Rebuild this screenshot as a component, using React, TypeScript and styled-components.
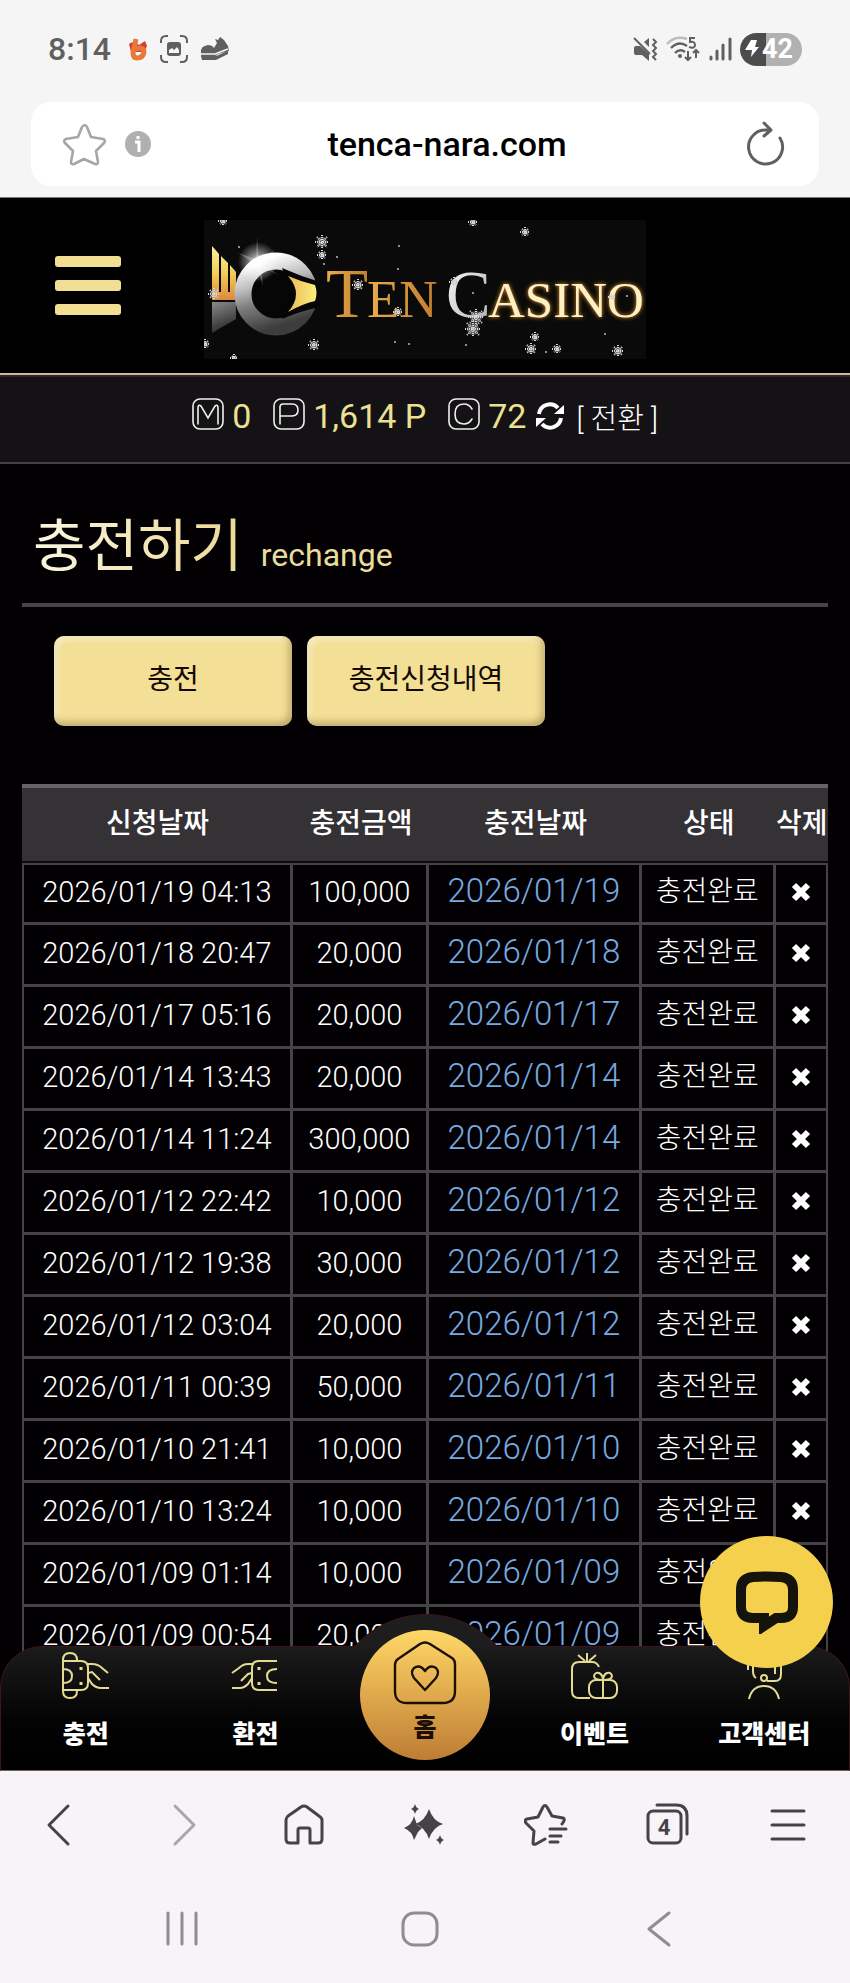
import React from 'react';
import styled, { createGlobalStyle } from 'styled-components';

const GlobalStyle = createGlobalStyle`
  * {
    box-sizing: border-box;
  }
  body {
    margin: 0;
    background: #000;
    font-family: Roboto, 'Noto Sans CJK KR', sans-serif;
  }
  button {
    padding: 0;
    border: 0;
    background: none;
    color: inherit;
    font: inherit;
    cursor: pointer;
  }
  a {
    color: inherit;
    text-decoration: none;
  }
  svg {
    display: block;
    flex: none;
  }
`;

const Phone = styled.div`
  display: flex;
  flex-direction: column;
  height: 100vh;
`;

/* ---------- top of the phone ---------- */

const TopChrome = styled.header`
  padding: 28px 31px 11px;
  background: #f5f5f5;
  border-bottom: 1px solid #777;
`;

const StatusBar = styled.div`
  display: flex;
  align-items: center;
  height: 42px;
  margin-bottom: 32px;
  padding: 0 17px;
  color: #606060;
`;

const Clock = styled.time`
  margin-right: 17px;
  font-size: 32px;
  font-weight: 500;
`;

const StatusIcons = styled.div`
  display: flex;
  align-items: center;
  gap: 12px;
`;

const StatusRight = styled(StatusIcons)`
  margin-left: auto;
  gap: 8px;
`;

const Battery = styled.div`
  display: flex;
  align-items: center;
  width: 62px;
  height: 33px;
  padding-left: 4px;
  border-radius: 17px;
  background: linear-gradient(90deg, #4c4c4c 42%, #b1b1b1 42%);
  color: #fff;
  font-size: 27px;
  font-weight: 700;
`;

const AddressBar = styled.div`
  display: flex;
  align-items: center;
  height: 84px;
  padding: 0 32px;
  border-radius: 20px;
  background: #fff;
`;

const AddressSide = styled.div`
  display: flex;
  flex: 1;
  align-items: center;
  gap: 19px;

  &:last-child {
    justify-content: flex-end;
  }
`;

const Url = styled.span`
  margin-left: 44px;
  color: #000;
  font-size: 34px;
  font-weight: 500;
`;

/* ---------- the site ---------- */

const Site = styled.div`
  position: relative;
  flex: 1;
  min-height: 0;
  overflow: hidden;
  background: #020003;
  color: #fff;
`;

const SiteHeader = styled.div`
  display: grid;
  grid-template-columns: 1fr auto 1fr;
  align-items: center;
  height: 177px;
  padding: 20px 55px 12px;
  background: #000;
  border-bottom: 2px solid #cbb899;
`;

const MenuButton = styled.button`
  display: flex;
  flex-direction: column;
  gap: 13px;
  width: 66px;
  margin-bottom: 9px;

  span {
    height: 11px;
    border-radius: 3px;
    background: #f3df94;
  }
`;

const Balance = styled.div`
  display: flex;
  align-items: center;
  justify-content: center;
  height: 89px;
  padding-bottom: 7px;
  background: #141214;
  border-top: 2px solid #2c2523;
  border-bottom: 2px solid #434043;
`;

const Coin = styled.svg`
  width: 32px;
  height: 32px;
  margin-bottom: 5px;
`;

const Amount = styled.span`
  margin: 0 22px 0 8px;
  color: #ece193;
  font-size: 34px;

  &:last-of-type {
    margin-right: 10px;
  }
`;

const ConvertButton = styled.button`
  display: flex;
  align-items: center;
  gap: 12px;
  font-size: 29px;
  font-weight: 300;
  white-space: pre;
`;

const Content = styled.main`
  padding: 0 22px;
`;

const TitleRow = styled.div`
  display: flex;
  align-items: baseline;
  gap: 18px;
  height: 143px;
  padding: 44px 11px 0;
  border-bottom: 4px solid #464245;
`;

const Title = styled.h1`
  margin: 0;
  background: linear-gradient(90deg, #faf6df, #ecd996);
  background-clip: text;
  color: transparent;
  font-size: 57px;
  font-weight: 400;
  line-height: 78px;
`;

const Subtitle = styled.span`
  color: #eadc9c;
  font-size: 32px;
`;

const Actions = styled.div`
  display: flex;
  gap: 15px;
  padding: 29px 32px 58px;
`;

const ActionButton = styled.button`
  width: 238px;
  height: 90px;
  padding-bottom: 8px;
  border-radius: 10px;
  background: #f3df96;
  box-shadow: inset -3px -4px 7px rgba(110, 90, 40, 0.4),
    inset 3px 3px 6px rgba(255, 255, 255, 0.5);
  color: #140a04;
  font-size: 28px;
`;

const HistoryTable = styled.table`
  width: 100%;
  table-layout: fixed;
  border-collapse: separate;
  border-spacing: 0;
  text-align: center;
  white-space: nowrap;
`;

const HeadCell = styled.th`
  height: 79px;
  padding: 0 0 7px;
  border-top: 4px solid #676467;
  border-bottom: 2px solid #0c0a0c;
  background: #353235;
  font-size: 28px;
  font-weight: 500;
`;

const Cell = styled.td`
  height: 62px;
  padding: 0 0 4px;
  border: 0 solid #454345;
  border-width: 0 3px 3px 0;
  font-size: 29px;
  font-weight: 300;
  line-height: 40px;

  &:first-child {
    border-left-width: 2px;
  }
  &:last-child {
    border-right-width: 2px;
  }
  tr:first-child > & {
    border-top-width: 2px;
  }
`;

const DateLink = styled.a`
  color: #76aae0;
  font-size: 33px;
`;

const Status = styled.span`
  font-size: 28px;
`;

const DeleteButton = styled.button`
  display: block;
  margin: 0 auto;
`;

/* ---------- site tab bar ---------- */

const TabBar = styled.nav`
  position: absolute;
  right: 0;
  bottom: 0;
  left: 0;
  display: grid;
  grid-template-columns: repeat(5, 1fr);
  height: 125px;
  border: 1px solid #3c1719;
  border-bottom: 1px solid #6c666a;
  border-radius: 42px 42px 0 0;
  background: linear-gradient(#1b1b1b, #040304 60%, #000);
`;

const TabLink = styled.a`
  display: flex;
  flex-direction: column;
  align-items: center;
  gap: 17px;
  padding-top: 5px;
  font-size: 25px;
  font-weight: 900;
  line-height: 36px;
`;

/* the part of the round hump that rises above the bar */
const HomeHump = styled.div`
  position: absolute;
  bottom: 100%;
  left: 50%;
  width: 146px;
  height: 33px;
  overflow: hidden;
  transform: translateX(-50%);

  &::before {
    content: '';
    display: block;
    width: 190px;
    height: 190px;
    margin-left: -22px;
    border: 1px solid #3c1719;
    border-radius: 50%;
    background: #1c1d1c;
  }
`;

const HomeLink = styled.a`
  position: absolute;
  bottom: 10px;
  left: 50%;
  display: flex;
  flex-direction: column;
  align-items: center;
  width: 130px;
  height: 130px;
  padding-top: 11px;
  border-radius: 50%;
  background: linear-gradient(#ffd867, #e0a94c 50%, #bd7d35);
  color: #1c0f08;
  font-size: 25px;
  font-weight: 900;
  line-height: 46px;
  transform: translateX(-50%);
`;

const ChatButton = styled.button`
  position: absolute;
  right: 17px;
  bottom: 103px;
  display: grid;
  place-items: center;
  width: 133px;
  height: 132px;
  border-radius: 50%;
  background: #f5d04d;
`;

/* ---------- bottom of the phone ---------- */

const BrowserBar = styled.nav`
  display: grid;
  grid-template-columns: repeat(7, 1fr);
  height: 108px;
  background: #f7f3f7;
  color: #474247;

  button {
    display: grid;
    place-items: center;
  }
`;

const SystemBar = styled(BrowserBar)`
  grid-template-columns: repeat(3, 1fr);
  height: 104px;
  padding: 0 72px 4px 63px;
  color: #918c91;
`;

const flakes = [
  [19, 1, 5], [118, 22, 7], [118, 35, 5], [154, 65, 6], [194, 92, 5],
  [10, 74, 6], [1, 124, 5], [110, 125, 6], [30, 138, 4], [269, 2, 5],
  [321, 12, 5], [250, 62, 5], [272, 97, 8], [269, 109, 8], [331, 117, 5],
  [327, 129, 6], [353, 129, 5], [414, 131, 6], [408, 77, 4],
];

const specks = [
  [35, 27], [133, 37], [194, 49], [195, 26], [191, 122], [205, 124],
  [269, 73], [423, 76], [401, 114], [342, 132], [262, 125], [120, 44],
];

const Logo = () => (
  <svg width="442" height="139" viewBox="0 0 442 139" role="img" aria-label="Ten Casino">
    <defs>
      <linearGradient id="fan" x1="0" y1="0" x2="0" y2="1">
        <stop offset="0" stopColor="#fff3a0" />
        <stop offset="0.5" stopColor="#f2cc58" />
        <stop offset="1" stopColor="#dd8a3c" />
      </linearGradient>
      <linearGradient id="pupil" x1="0" y1="0" x2="1" y2="0">
        <stop offset="0" stopColor="#e9b95a" />
        <stop offset="1" stopColor="#fbee7c" />
      </linearGradient>
      <linearGradient id="ring" x1="0.2" y1="0" x2="0.5" y2="1">
        <stop offset="0" stopColor="#fff" />
        <stop offset="0.35" stopColor="#bdbdbd" />
        <stop offset="0.6" stopColor="#7e7e7e" />
        <stop offset="1" stopColor="#3d3d3d" />
      </linearGradient>
      <linearGradient id="base" x1="0" y1="0" x2="0.3" y2="1">
        <stop offset="0" stopColor="#8a8a8a" />
        <stop offset="1" stopColor="#2c2c2c" />
      </linearGradient>
      <linearGradient id="ten" x1="0" y1="0" x2="1" y2="0">
        <stop offset="0" stopColor="#e9ac4c" />
        <stop offset="1" stopColor="#c07f2c" />
      </linearGradient>
      <linearGradient id="silver" x1="0" y1="0" x2="1" y2="1">
        <stop offset="0" stopColor="#fff" />
        <stop offset="1" stopColor="#aaa" />
      </linearGradient>
      <radialGradient id="flare">
        <stop offset="0" stopColor="#fff" />
        <stop offset="0.4" stopColor="#fff" stopOpacity="0.5" />
        <stop offset="1" stopColor="#fff" stopOpacity="0" />
      </radialGradient>
      <filter id="glow" x="-10%" y="-30%" width="120%" height="160%">
        <feDropShadow dx="0" dy="0" stdDeviation="2" floodColor="#f09a1c" />
      </filter>
    </defs>
    <rect width="442" height="139" fill="#0a0a0a" />
    <path d="M8 26l7 8v38h2V36l7 7v29h2V45l6 7v28H8z" fill="url(#fan)" />
    <path d="M8 82h24v17L8 113z" fill="url(#base)" />
    <circle cx="72" cy="74" r="33" fill="#060606" stroke="url(#ring)" strokeWidth="17" />
    <path d="M78 48q18 8 38 14v25q-20 4-38 12q12-25 0-51z" fill="#050505" />
    <path d="M84 56q14 6 27 9q3 8 0 16q-13 3-27 11q16-18 0-36z" fill="url(#pupil)" />
    <circle cx="54" cy="42" r="20" fill="url(#flare)" />
    <path d="M53 17l2 22l16-9l-13 13l16 12l-17-9l2 20l-6-19l-14 9l11-13l-16-10l18 6z" fill="#fff" opacity="0.25" />
    <g fontFamily="Liberation Serif, serif">
      <text x="122" y="97" fontSize="69" fill="url(#ten)">T</text>
      <text x="163" y="97" fontSize="53" fill="url(#ten)">EN</text>
      <text x="242" y="97" fontSize="67" fill="url(#silver)">C</text>
      <text x="284" y="97" fontSize="51" fill="#fff0c4" filter="url(#glow)">ASINO</text>
    </g>
    {flakes.map(([x, y, r]) => (
      <g key={`${x}-${y}`} transform={`translate(${x} ${y})`} stroke="#d8d8d8" strokeWidth="2">
        <circle r={r - 2} fill="#aaa" stroke="none" opacity="0.5" />
        <path
          d={`M0 ${-r}V${r}M${-r} 0H${r}M${2 - r} ${2 - r}L${r - 2} ${r - 2}M${r - 2} ${2 - r}L${2 - r} ${r - 2}`}
          strokeDasharray="1 1"
        />
      </g>
    ))}
    {specks.map(([x, y]) => (
      <circle key={`${x}-${y}`} cx={x} cy={y} r="1" fill="#bbb" />
    ))}
  </svg>
);

const coinPaths: Record<string, string> = {
  M: 'M6 26V10q0-4 3-2l7 12l7-12q3-2 3 2v16',
  P: 'M7 26V9q0-3 3-3h9q6 0 6 6t-6 6H7',
  C: 'M24 11q-3-5-8-5q-9 0-9 10t9 10q5 0 8-5',
};

const CoinIcon = ({ kind }: { kind: string }) => (
  <Coin viewBox="0 0 32 32" fill="none" stroke="#f0f0f0" strokeWidth="1.6" aria-label={kind}>
    <rect x="1" y="1" width="30" height="30" rx="7" />
    <path d={coinPaths[kind]} strokeLinecap="round" />
  </Coin>
);

const RefreshIcon = () => (
  <svg width="28" height="28" viewBox="0 0 28 28" fill="none" stroke="#fff" strokeWidth="4">
    <path d="M3 12A11 11 0 0 1 22 6M25 16A11 11 0 0 1 6 22" />
    <path d="M28 3v9h-10zM0 25v-9h10z" fill="#fff" stroke="none" />
  </svg>
);

const CrossIcon = () => (
  <svg width="20" height="20" viewBox="0 0 20 20" stroke="#fff" strokeWidth="6">
    <path d="M3 3l14 14M17 3L3 17" />
  </svg>
);

const DepositIcon = () => (
  <>
    <path d="M1 8Q1 1 8 1t7 7v1M1 39q0 7 7 7t7-7v-1M1 8v31M1 9h18q7 0 7 7v15q0 7-7 7H1M1 17q9 0 9 7t-9 7" />
    <path d="M24 12h6q6 0 10 4l6 5M26 21l4-1l8 8M26 26l4 6q4 4 9 4h8" />
    <path d="M19 15v3M19 30v3" strokeWidth="3" />
  </>
);

const WithdrawIcon = () => (
  <>
    <path d="M46 9H28q-7 0-7 7v15q0 7 7 7h18M46 17q-10 0-10 7t10 7" />
    <path d="M23 12h-6q-5 0-9 4l-7 5M21 21l-4 1l-7 7M21 26l-4 6q-4 4-8 4H1" />
    <path d="M28 15v3M28 30v3" strokeWidth="3" />
  </>
);

const GiftIcon = () => (
  <>
    <path d="M28 15q-2-5-7-5H8q-7 0-7 7v22q0 7 7 7h11M16 9V1M14 9L7 3M18 9l7-6" />
    <rect x="18" y="28" width="28" height="18" rx="7" />
    <path d="M32 46V28M32 28q-9 0-9-4q1-4 5-3q4 2 4 7zM32 28q9 0 9-4q-1-4-5-3q-4 2-4 7z" />
  </>
);

const SupportIcon = () => (
  <>
    <path d="M8 18V14Q8 3 24 3t17 11v8q0 7-6 7h-8M13 14v5q0 5 3 7M35 14v8" />
    <circle cx="24" cy="26" r="3" />
    <path d="M9 47q3-13 15-13t15 13" />
  </>
);

const tabs = [
  { label: '충전', icon: <DepositIcon /> },
  { label: '환전', icon: <WithdrawIcon /> },
  null,
  { label: '이벤트', icon: <GiftIcon /> },
  { label: '고객센터', icon: <SupportIcon /> },
];

const history = [
  ['2026/01/19', '04:13', '100,000'],
  ['2026/01/18', '20:47', '20,000'],
  ['2026/01/17', '05:16', '20,000'],
  ['2026/01/14', '13:43', '20,000'],
  ['2026/01/14', '11:24', '300,000'],
  ['2026/01/12', '22:42', '10,000'],
  ['2026/01/12', '19:38', '30,000'],
  ['2026/01/12', '03:04', '20,000'],
  ['2026/01/11', '00:39', '50,000'],
  ['2026/01/10', '21:41', '10,000'],
  ['2026/01/10', '13:24', '10,000'],
  ['2026/01/09', '01:14', '10,000'],
  ['2026/01/09', '00:54', '20,000'],
];

const LineIcon = ({ children }: { children: React.ReactNode }) => (
  <svg
    width="44"
    height="44"
    viewBox="0 0 44 44"
    fill="none"
    stroke="currentColor"
    strokeWidth="3"
    strokeLinecap="round"
    strokeLinejoin="round"
  >
    {children}
  </svg>
);

const PhoneTop = () => (
  <TopChrome>
    <StatusBar>
      <Clock>8:14</Clock>
      <StatusIcons>
        <svg width="20" height="26" viewBox="0 0 20 26">
          <path d="M1 8q3-3 7-1l3 2l6-4l2 5l-3 6H3z" fill="#c8442f" />
          <path
            d="M8 3L5 17q0 5 4 5q6 0 7-6q0-4-4-4q-3 0-5 2"
            fill="none"
            stroke="#e9783a"
            strokeWidth="5"
            strokeLinejoin="round"
          />
        </svg>
        <svg width="28" height="28" viewBox="0 0 28 28" fill="none" stroke="#606060" strokeWidth="2">
          <path d="M1 8V6q0-5 5-5h2M20 1h2q5 0 5 5v2M27 20v2q0 5-5 5h-2M8 27H6q-5 0-5-5v-2" />
          <rect x="7" y="7" width="14" height="14" rx="3" fill="#606060" stroke="none" />
          <path d="M9 18v-3l3-2l2 2l3-3l2 3v3z" fill="#f5f5f5" stroke="none" />
        </svg>
        <svg width="30" height="26" viewBox="0 0 30 26" fill="#606060">
          <path d="M1 17q-1-7 7-8q4 0 6 3l3-5l-2-4l3 1l2-3l4 3l4 6l1 5l-11 3l-4 3H1zM1 20h15l12-5v3l-12 6H2z" />
          <path d="M1 18h14l13-5" fill="none" stroke="#f5f5f5" strokeWidth="1.5" />
        </svg>
      </StatusIcons>
      <StatusRight>
        <svg width="25" height="25" viewBox="0 0 25 25" fill="#606060">
          <path d="M1 11q0-2 2-2h4l9 8v7l-7-6H3q-2 0-2-2zM11 5l5-4v9z" />
          <path d="M1 1l16 16M20 2l3 3l-3 3l3 3l-3 3l3 3l-3 3l3 3" fill="none" stroke="#606060" strokeWidth="2" />
        </svg>
        <svg width="35" height="26" viewBox="0 0 35 26" fill="none" stroke="#606060" strokeWidth="2.4">
          <path d="M1 8Q9-1 21 3" stroke="#bbb" />
          <path d="M5 12q8-8 16-2M9 17q5-5 10-1" />
          <circle cx="14" cy="20" r="2" fill="#606060" stroke="none" />
          <path d="M29 2h-5v4q5-1 5 3t-6 2M22 15v9M19 21l3 3l3-3M30 22v-8M27 17l3-3l3 3" strokeWidth="2" />
        </svg>
        <svg width="23" height="25" viewBox="0 0 23 25" stroke="#606060" strokeWidth="3" strokeLinecap="round">
          <path d="M2 20v2M8 14v8M14 8v14M21 2v20" />
        </svg>
        <Battery>
          <svg width="18" height="20" viewBox="0 0 18 20" fill="#fff">
            <path d="M7 1h6l-2 7h4L7 18l1-7H1z" />
          </svg>
          42
        </Battery>
      </StatusRight>
    </StatusBar>
    <AddressBar>
      <AddressSide>
        <svg width="43" height="43" viewBox="0 0 43 43" fill="none" stroke="#a6a6a6" strokeWidth="2.6" strokeLinejoin="round">
          <path d="M19 4q3-4 5 0l4 10l12 2q3 1 1 4l-8 8l2 11q0 3-3 2l-11-5l-10 5q-3 1-3-2l2-11l-8-8q-2-3 1-4l12-2z" />
        </svg>
        <svg width="26" height="26" viewBox="0 0 26 26">
          <circle cx="13" cy="13" r="13" fill="#b0b0b0" />
          <path d="M10 11h4v10M13 5v3" stroke="#fff" strokeWidth="3" fill="none" />
        </svg>
      </AddressSide>
      <Url>tenca-nara.com</Url>
      <AddressSide>
        <button aria-label="새로고침">
          <svg width="42" height="46" viewBox="0 0 42 46" fill="none" stroke="#606060" strokeWidth="3" strokeLinecap="round" strokeLinejoin="round">
            <path d="M35 17A17 17 0 1 1 21 9l5 0M19 2l7 7l-7 6" />
          </svg>
        </button>
      </AddressSide>
    </AddressBar>
  </TopChrome>
);

const HistoryRows = () => (
  <HistoryTable>
    <colgroup>
      <col style={{ width: '33.6%' }} />
      <col style={{ width: '16.9%' }} />
      <col style={{ width: '26.4%' }} />
      <col style={{ width: '16.6%' }} />
      <col />
    </colgroup>
    <thead>
      <tr>
        {['신청날짜', '충전금액', '충전날짜', '상태', '삭제'].map((head) => (
          <HeadCell key={head}>{head}</HeadCell>
        ))}
      </tr>
    </thead>
    <tbody>
      {history.map(([date, time, amount]) => (
        <tr key={date + time}>
          <Cell>{`${date} ${time}`}</Cell>
          <Cell>{amount}</Cell>
          <Cell>
            <DateLink href="#">{date}</DateLink>
          </Cell>
          <Cell>
            <Status>충전완료</Status>
          </Cell>
          <Cell>
            <DeleteButton aria-label="삭제">
              <CrossIcon />
            </DeleteButton>
          </Cell>
        </tr>
      ))}
    </tbody>
  </HistoryTable>
);

const SiteTabs = () => (
  <TabBar>
    <HomeHump />
    {tabs.map((tab, i) =>
      tab ? (
        <TabLink href="#" key={tab.label}>
          <svg width="48" height="48" viewBox="0 0 48 48" fill="none" stroke="#e5da92" strokeWidth="2">
            {tab.icon}
          </svg>
          {tab.label}
        </TabLink>
      ) : (
        <span key={i} />
      )
    )}
    <HomeLink href="#">
      <svg width="64" height="64" viewBox="0 0 64 64" fill="none" stroke="#1c0f08" strokeWidth="2.4" strokeLinejoin="round">
        <path d="M2 24q0-4 3-6L27 3q5-3 10 0l22 14q3 2 3 6v27q0 12-12 12H14Q2 62 2 50z" />
        <path d="M32 49L21 37q-4-6 0-10q6-4 11 3q5-7 11-3q4 4 0 10z" />
      </svg>
      홈
    </HomeLink>
  </TabBar>
);

const PhoneBottom = () => (
  <>
    <BrowserBar>
      <button aria-label="뒤로">
        <LineIcon><path d="M29 3L10 22l19 19" /></LineIcon>
      </button>
      <button aria-label="앞으로">
        <LineIcon><path d="M15 3l19 19l-19 19" stroke="#aaa5aa" /></LineIcon>
      </button>
      <button aria-label="홈">
        <LineIcon>
          <path d="M4 17q0-2 2-4L19 4q3-2 6 0l12 9q3 2 3 4v19q0 4-4 4h-8V27q0-2-2-2h-8q-2 0-2 2v13H8q-4 0-4-4z" />
        </LineIcon>
      </button>
      <button aria-label="AI">
        <LineIcon>
          <g fill="currentColor" stroke="none">
            <path d="M26 6q4 12 14 15q-10 3-14 15q-4-12-14-15q10-3 14-15z" />
            <path d="M11 13l3 9l5 3l-4 4l-4 8q-2-9-10-12q8-3 10-12z" />
            <path d="M12 1q1 4 4 5q-3 1-4 5q-1-4-4-5q3-1 4-5zM37 32q1 4 4 5q-3 1-4 5q-1-4-4-5q3-1 4-5z" />
          </g>
        </LineIcon>
      </button>
      <button aria-label="북마크">
        <LineIcon>
          <path d="M38 21q4-5 1-6l-11-2l-5-9q-2-3-4 0l-5 10l-11 2q-3 1-1 4l8 8l-1 12q0 2 3 1l9-5M26 26h16M26 33h11M26 39h8" />
        </LineIcon>
      </button>
      <button aria-label="탭">
        <LineIcon>
          <rect x="2" y="8" width="33" height="32" rx="5" />
          <path d="M11 2h19q11 0 11 11v18" />
          <text x="18" y="32" textAnchor="middle" fontSize="22" fontWeight="700" fill="currentColor" stroke="none">4</text>
        </LineIcon>
      </button>
      <button aria-label="메뉴">
        <LineIcon><path d="M5 8h32M5 22h32M5 36h32" /></LineIcon>
      </button>
    </BrowserBar>
    <SystemBar>
      <button aria-label="최근 앱">
        <LineIcon><path d="M8 6v31M22 6v31M36 6v31" /></LineIcon>
      </button>
      <button aria-label="홈 화면">
        <LineIcon><rect x="5" y="6" width="34" height="32" rx="11" /></LineIcon>
      </button>
      <button aria-label="이전">
        <LineIcon><path d="M32 6L12 22l20 16" /></LineIcon>
      </button>
    </SystemBar>
  </>
);

const App = () => {
  return (
    <Phone>
      <GlobalStyle />
      <PhoneTop />
      <Site>
        <SiteHeader>
          <MenuButton aria-label="메뉴">
            <span />
            <span />
            <span />
          </MenuButton>
          <Logo />
        </SiteHeader>
        <Balance>
          <CoinIcon kind="M" />
          <Amount>0</Amount>
          <CoinIcon kind="P" />
          <Amount>1,614 P</Amount>
          <CoinIcon kind="C" />
          <Amount>72</Amount>
          <ConvertButton>
            <RefreshIcon />
            [ 전환 ]
          </ConvertButton>
        </Balance>
        <Content>
          <TitleRow>
            <Title>충전하기</Title>
            <Subtitle>rechange</Subtitle>
          </TitleRow>
          <Actions>
            <ActionButton>충전</ActionButton>
            <ActionButton>충전신청내역</ActionButton>
          </Actions>
          <HistoryRows />
        </Content>
        <SiteTabs />
        <ChatButton aria-label="채팅">
          <svg width="64" height="64" viewBox="0 0 64 64" fill="none" stroke="#14130c" strokeWidth="10">
            <path d="M29 48H18Q6 48 6 37V20Q6 8 18 7q14-1 28 0q12 1 12 13v17q0 11-12 11h-5L29 56z" />
          </svg>
        </ChatButton>
      </Site>
      <PhoneBottom />
    </Phone>
  );
};

export default App;
